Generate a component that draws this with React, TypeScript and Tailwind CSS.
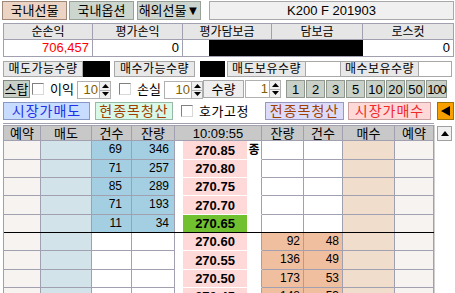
import React from "react";

const F = { fontFamily: '"Liberation Sans", "Noto Sans CJK KR", sans-serif' };

function Check({ className = "" }: { className?: string }) {
  return (
    <div
      className={
        "w-[12px] h-[12px] shrink-0 bg-white border border-t-[#808080] border-l-[#808080] border-b-[#d8d8d8] border-r-[#d8d8d8] " +
        className
      }
    />
  );
}

function Spinner({ value, w }: { value: string; w: number }) {
  return (
    <div className="flex h-[18px]">
      <div
        className="h-full bg-white border border-[#b0b0b0] text-[13px] leading-[16px] text-right pr-[1px] text-[#806000]"
        style={{ width: w }}
      >
        {value}
      </div>
      <div className="w-[11px] h-full flex flex-col border border-l-0 border-[#b0b0b0] bg-[#f0f0f0]">
        <div className="flex-1 flex items-center justify-center border-b border-[#b0b0b0]">
          <svg width="7" height="4" viewBox="0 0 7 4">
            <polygon points="3.5,0 7,4 0,4" fill="#000" />
          </svg>
        </div>
        <div className="flex-1 flex items-center justify-center">
          <svg width="7" height="4" viewBox="0 0 7 4">
            <polygon points="0,0 7,0 3.5,4" fill="#000" />
          </svg>
        </div>
      </div>
    </div>
  );
}

const COLS = [38, 51, 40, 43, 87, 42, 39, 52, 39];

type Row = {
  price: string;
  sc?: string;
  sq?: string;
  bq?: string;
  bc?: string;
  cur?: boolean;
  mark?: string;
  h: number;
};

const rows: Row[] = [
  { price: "270.85", sc: "69", sq: "346", mark: "종", h: 19 },
  { price: "270.80", sc: "71", sq: "257", h: 18 },
  { price: "270.75", sc: "85", sq: "289", h: 18 },
  { price: "270.70", sc: "71", sq: "193", h: 19 },
  { price: "270.65", sc: "11", sq: "34", cur: true, h: 18 },
  { price: "270.60", bq: "92", bc: "48", h: 18 },
  { price: "270.55", bq: "136", bc: "49", h: 19 },
  { price: "270.50", bq: "173", bc: "53", h: 18 },
  { price: "270.45", bq: "148", bc: "53", h: 18 },
];

const lbl =
  "bg-[#e8e8e8] border border-[#a8a8a8] flex items-center justify-center tracking-[0.5px] leading-none whitespace-nowrap text-[12px]";

export default function App() {
  return (
    <div className="w-[455px] h-[293px] overflow-hidden bg-white text-black text-[12px] relative whitespace-nowrap" style={F}>
      {/* Top tabs */}
      <div className="flex h-[19px] mt-[1px] ml-[2px] items-stretch">
        <div className="w-[65px] bg-[#ecd4c4] border border-[#a08878] flex items-center justify-center text-[13px]">국내선물</div>
        <div className="w-[65px] ml-[2px] bg-[#ccd6cf] border border-[#98a098] flex items-center justify-center text-[13px]">국내옵션</div>
        <div className="w-[64px] ml-[3px] bg-[#ccd6cf] border border-[#98a098] flex items-center justify-center text-[13px]">해외선물▼</div>
        <div className="w-[245px] ml-[8px] bg-[#f0f0f0] border border-[#a8a8a8] flex items-center justify-center text-[13px]">K200 F 201903</div>
      </div>

      {/* Summary table */}
      <div className="ml-[3px] mt-[3px] w-[451px] border border-[#a0a0b0]">
        <div className="flex h-[16px] bg-[#e6e6e6] border-b border-[#a0a0b0]">
          {[
            ["순손익", 89],
            ["평가손익", 90],
            ["평가담보금", 89],
            ["담보금", 91],
            ["로스컷", 90],
          ].map(([t, w], i) => (
            <div
              key={i}
              className={"flex items-center justify-center text-[12px] leading-none " + (i < 4 ? "border-r border-[#a0a0b0]" : "")}
              style={{ width: w as number }}
            >
              {t}
            </div>
          ))}
        </div>
        <div className="flex h-[16px] text-[13px] leading-[16px]">
          <div className="w-[89px] border-r border-[#a0a0b0] text-right pr-[3px] text-[#ff0000]">706,457</div>
          <div className="w-[90px] border-r border-[#a0a0b0] text-right pr-[3px]">0</div>
          <div className="w-[89px] flex justify-end">
            <div className="w-[63px] h-full bg-black" />
          </div>
          <div className="w-[91px] bg-black" />
          <div className="w-[90px] text-right pr-[3px]">0</div>
        </div>
      </div>

      {/* Quantity row */}
      <div className="flex h-[16px] mt-[4px] ml-[3px] items-stretch">
        <div className={"w-[80px] " + lbl}>매도가능수량</div>
        <div className="w-[27px] bg-black" />
        <div className={"w-[81px] ml-[4px] " + lbl}>매수가능수량</div>
        <div className="w-[5px] bg-white" />
        <div className="w-[25px] bg-black" />
        <div className={"w-[79px] ml-[2px] " + lbl}>매도보유수량</div>
        <div className="w-[34px] bg-white border-y border-[#a8a8a8]" />
        <div className={"w-[79px] " + lbl}>매수보유수량</div>
        <div className="w-[33px] bg-white border border-l-0 border-[#a8a8a8]" />
      </div>

      {/* Stop row */}
      <div className="flex h-[18px] mt-[3px] ml-[3px] items-center text-[13px]">
        <div className="w-[27px] h-full bg-[#c8d0c8] border border-[#808880] flex items-center justify-center leading-none">스탑</div>
        <Check className="ml-[2px]" />
        <div className="ml-[6px] w-[26px] leading-none">이익</div>
        <div className="ml-[1px] mt-[2px]">
          <Spinner value="10" w={23} />
        </div>
        <Check className="ml-[8px]" />
        <div className="ml-[6px] w-[26px] leading-none">손실</div>
        <div className="ml-[1px] mt-[2px]">
          <Spinner value="10" w={28} />
        </div>
        <div className="w-[41px] h-full bg-[#eeeeee] border border-[#a8a8a8] flex items-center justify-center leading-none">수량</div>
        <div className="ml-[1px]">
          <Spinner value="1" w={25} />
        </div>
        <div className="flex ml-[5px] h-full gap-px">
          {["1", "2", "3", "5", "10", "20", "50", "100"].map((n) => (
            <div
              key={n}
              className={"h-full bg-[#c8d0c8] border border-[#909890] flex items-center justify-center leading-none " + (n === "100" ? "w-[21px] tracking-[-1px]" : "w-[19px]")}
            >
              {n}
            </div>
          ))}
        </div>
      </div>

      {/* Market order row */}
      <div className="flex h-[18px] mt-[4px] ml-[3px] items-center text-[14px]">
        <div className="w-[87px] h-full bg-[#c8dcff] border border-[#8898c8] flex items-center justify-center leading-none text-[#2030e8] tracking-[1px]">시장가매도</div>
        <div className="w-[78px] h-full ml-[5px] bg-[#d8f8e8] border border-[#98b8a8] flex items-center justify-center leading-none text-[#a04000] tracking-[1px]">현종목청산</div>
        <Check className="ml-[8px]" />
        <div className="ml-[6px] w-[60px] text-[13px] leading-none tracking-[0.5px]">호가고정</div>
        <div className="w-[79px] h-full ml-[6px] bg-[#dcdcfa] border border-[#9898c0] flex items-center justify-center leading-none text-[#a04000] tracking-[1px]">전종목청산</div>
        <div className="w-[83px] h-full ml-[4px] bg-[#ffd8d8] border border-[#c8a0a0] flex items-center justify-center leading-none text-[#f02828] tracking-[1px]">시장가매수</div>
        <div className="w-[17px] h-full ml-[6px] bg-[#f8a000] border border-[#a07000] flex items-center justify-center">
          <svg width="9" height="10" viewBox="0 0 9 10">
            <polygon points="9,0 9,10 0,5" fill="#000" />
          </svg>
        </div>
      </div>

      <div className="ml-[3px] mt-[3px] w-[431px] h-px bg-[#a0a0b0]" />

      {/* Hoga table */}
      <div className="flex mt-[1px] ml-[3px]">
        <div className="w-[431px] border-l border-[#a0a0b0]">
          <div className="flex h-[16px] bg-[#c8c8c8] border-t border-b border-[#a0a0b0] text-[13px]">
            {["예약", "매도", "건수", "잔량", "10:09:55", "잔량", "건수", "매수", "예약"].map((t, i) => (
              <div
                key={i}
                className="flex items-center justify-center leading-none border-r border-[#a0a0b0]"
                style={{ width: i === 0 ? COLS[0] - 1 : COLS[i] }}
              >
                {t}
              </div>
            ))}
          </div>
          {rows.map((r, i) => {
            const sellData = r.sc !== undefined;
            const buyData = r.bq !== undefined;
            const bline = i === 4 ? "" : "border-b border-[#a0a0b0]";
            return (
              <div key={i} className={"flex " + (i === 4 ? "border-b border-black" : "")} style={{ height: r.h }}>
                <div className={"w-[37px] bg-[#f6f3f0] border-r border-[#a0a0b0] " + bline} />
                <div className={"w-[51px] bg-[#d3e3ea] border-r border-[#a0a0b0] " + bline} />
                <div
                  className={"w-[40px] border-r border-[#a0a0b0] text-right pr-[9px] text-[12px] leading-[17px] " + (sellData ? "bg-[#a4cfe3] " : "bg-white ") + bline}
                >
                  {r.sc}
                </div>
                <div
                  className={"w-[43px] border-r border-[#a0a0b0] text-right pr-[5px] text-[12px] leading-[17px] " + (sellData ? "bg-[#a4cfe3] " : "bg-white ") + bline}
                >
                  {r.sq}
                </div>
                <div className={"w-[87px] flex bg-white border-r border-[#a0a0b0] " + (i === 4 ? "" : "border-b border-b-white")}>
                  <div className="w-[8px]" />
                  <div
                    className={"w-[65px] flex items-center justify-center font-bold text-[13px] leading-none " + (r.cur ? "bg-[#70c030]" : "bg-[#ffd8d8]")}
                  >
                    {r.price}
                  </div>
                  <div className="w-[14px] flex items-center justify-center text-[12px] font-bold leading-none">{r.mark}</div>
                </div>
                <div
                  className={"w-[42px] border-r border-[#a0a0b0] text-right pr-[3px] text-[12px] leading-[17px] " + (buyData ? "bg-[#f0bfa0] " : "bg-white ") + bline}
                >
                  {r.bq}
                </div>
                <div
                  className={"w-[39px] border-r border-[#a0a0b0] text-right pr-[3px] text-[12px] leading-[17px] " + (buyData ? "bg-[#f0bfa0] " : "bg-white ") + bline}
                >
                  {r.bc}
                </div>
                <div className={"w-[52px] bg-[#f0ddcb] border-r border-[#a0a0b0] " + bline} />
                <div className={"w-[39px] bg-[#f6f3f0] border-r border-[#a0a0b0] " + bline} />
              </div>
            );
          })}
        </div>
        {/* scrollbar */}
        <div className="w-[21px] h-[170px] bg-white border-l border-[#d0d0d0] pt-[1px] pl-[2px]">
          <div className="w-[15px] h-[15px] bg-[#f0f0f0] border border-[#a0a0a0] flex items-center justify-center">
            <svg width="8" height="5" viewBox="0 0 8 5">
              <polygon points="4,0 8,5 0,5" fill="#000" />
            </svg>
          </div>
        </div>
      </div>
    </div>
  );
}
